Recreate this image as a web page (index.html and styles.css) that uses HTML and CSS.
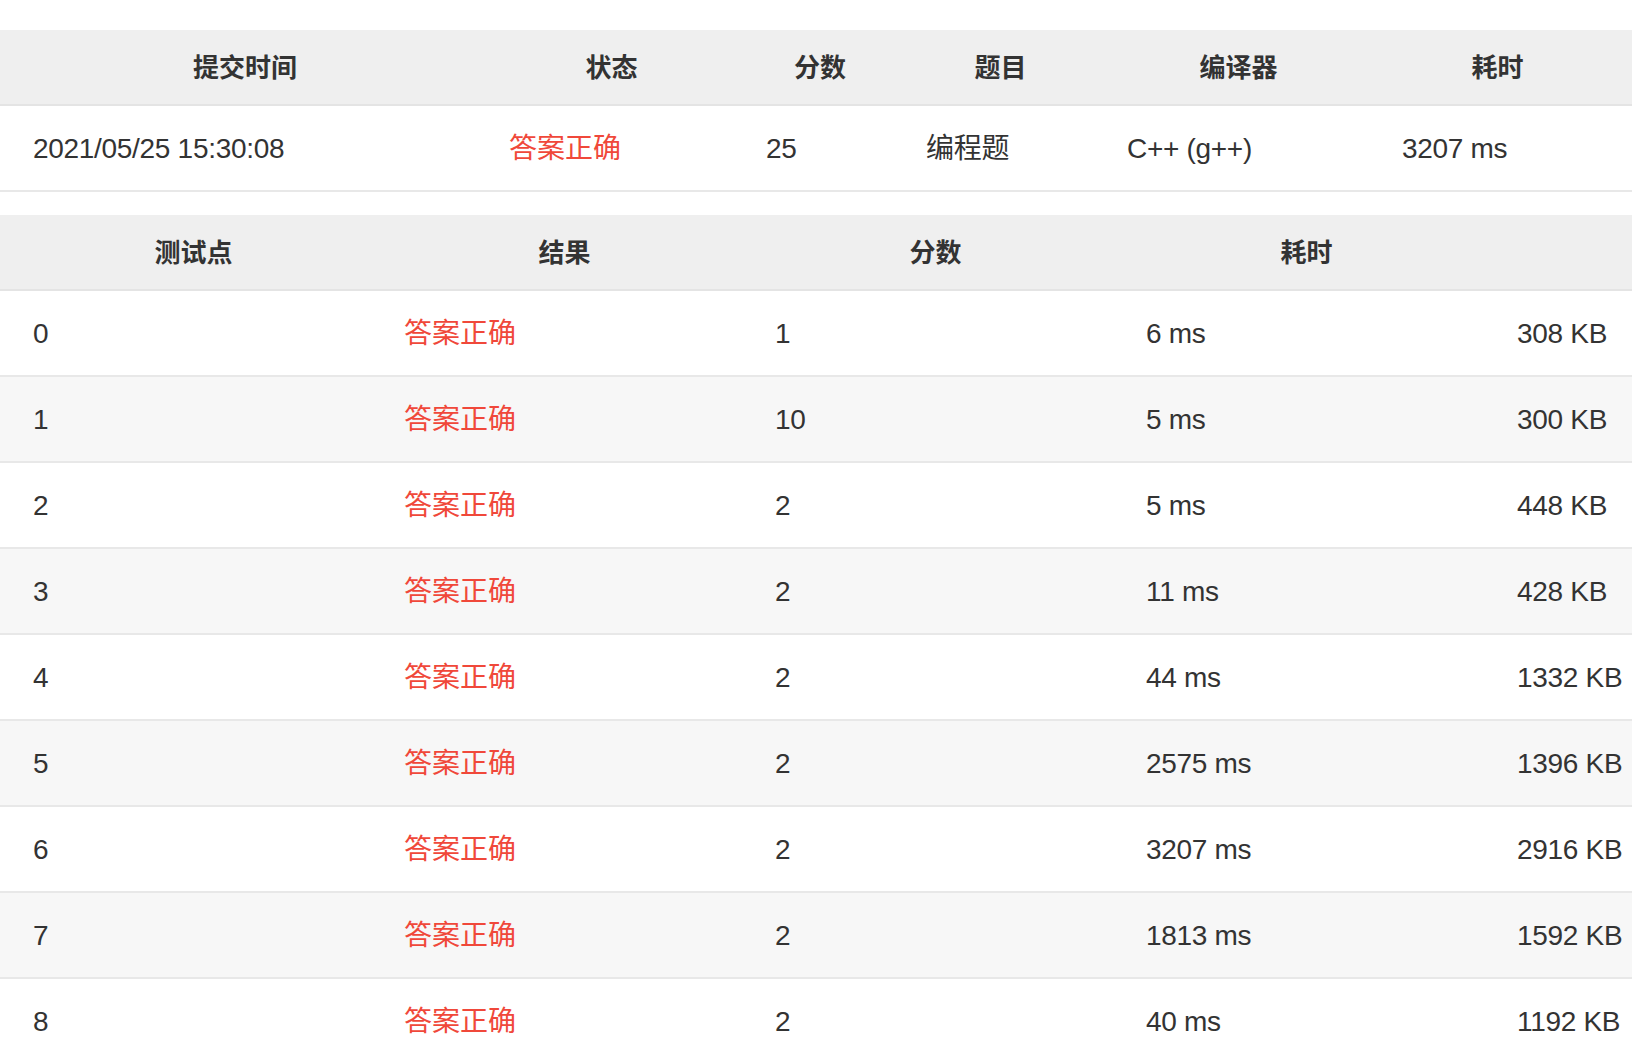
FILE: index.html
```html
<!DOCTYPE html>
<html lang="zh-CN">
<head>
<meta charset="utf-8">
<title>提交详情</title>
<link rel="stylesheet" href="styles.css">
</head>
<body>
<div class="page">
  <section class="table summary">
    <div class="row head">
      <div class="cell">提交时间</div>
      <div class="cell">状态</div>
      <div class="cell">分数</div>
      <div class="cell">题目</div>
      <div class="cell">编译器</div>
      <div class="cell last">耗时</div>
    </div>
    <div class="row">
      <div class="cell">2021/05/25 15:30:08</div>
      <div class="cell ok">答案正确</div>
      <div class="cell">25</div>
      <div class="cell">编程题</div>
      <div class="cell">C++ (g++)</div>
      <div class="cell">3207 ms</div>
    </div>
  </section>

  <section class="table cases">
    <div class="row head">
      <div class="cell">测试点</div>
      <div class="cell">结果</div>
      <div class="cell">分数</div>
      <div class="cell">耗时</div>
      <div class="cell"></div>
    </div>
    <div class="row"><div class="cell">0</div><div class="cell ok">答案正确</div><div class="cell">1</div><div class="cell">6 ms</div><div class="cell">308 KB</div></div>
    <div class="row alt"><div class="cell">1</div><div class="cell ok">答案正确</div><div class="cell">10</div><div class="cell">5 ms</div><div class="cell">300 KB</div></div>
    <div class="row"><div class="cell">2</div><div class="cell ok">答案正确</div><div class="cell">2</div><div class="cell">5 ms</div><div class="cell">448 KB</div></div>
    <div class="row alt"><div class="cell">3</div><div class="cell ok">答案正确</div><div class="cell">2</div><div class="cell">11 ms</div><div class="cell">428 KB</div></div>
    <div class="row"><div class="cell">4</div><div class="cell ok">答案正确</div><div class="cell">2</div><div class="cell">44 ms</div><div class="cell">1332 KB</div></div>
    <div class="row alt"><div class="cell">5</div><div class="cell ok">答案正确</div><div class="cell">2</div><div class="cell">2575 ms</div><div class="cell">1396 KB</div></div>
    <div class="row"><div class="cell">6</div><div class="cell ok">答案正确</div><div class="cell">2</div><div class="cell">3207 ms</div><div class="cell">2916 KB</div></div>
    <div class="row alt"><div class="cell">7</div><div class="cell ok">答案正确</div><div class="cell">2</div><div class="cell">1813 ms</div><div class="cell">1592 KB</div></div>
    <div class="row"><div class="cell">8</div><div class="cell ok">答案正确</div><div class="cell">2</div><div class="cell">40 ms</div><div class="cell">1192 KB</div></div>
  </section>
</div>
</body>
</html>
```
FILE: styles.css
```css
html, body {
  margin: 0;
  padding: 0;
  background: #ffffff;
  overflow: hidden;
}

.page {
  padding-top: 30px;
  width: 1632px;
  overflow: hidden;
  font-family: "Liberation Sans", "Noto Sans CJK SC", sans-serif;
  color: #333333;
}

.table {
  display: flex;
  flex-direction: column;
}

.summary .row {
  display: grid;
  grid-template-columns: 476px 257px 160px 201px 275px 263px;
}

.cases {
  margin-top: 23px;
}

.cases .row {
  display: grid;
  grid-template-columns: repeat(5, 371px);
}

.row {
  height: 84px;
  border-bottom: 2px solid #e8e8e8;
  align-items: center;
  background: #ffffff;
}

.row.alt {
  background: #f7f7f7;
}

.row.head {
  height: 74px;
  background: #efefef;
  border-bottom: 2px solid #e4e4e4;
}

.cell {
  padding-left: 33px;
  padding-top: 1px;
  font-size: 28px;
  line-height: 34px;
  letter-spacing: -0.3px;
  white-space: nowrap;
}

.head .cell {
  text-align: center;
  padding-left: 32px;
  padding-right: 18px;
  padding-top: 1px;
  font-size: 26px;
  font-weight: 700;
  letter-spacing: 0;
  color: #333333;
}

.cases .head .cell {
  padding-right: 16px;
}

.summary .head .cell.last {
  padding-right: 38px;
}

.cell.ok {
  color: #f0483a;
  letter-spacing: 0;
}
```
